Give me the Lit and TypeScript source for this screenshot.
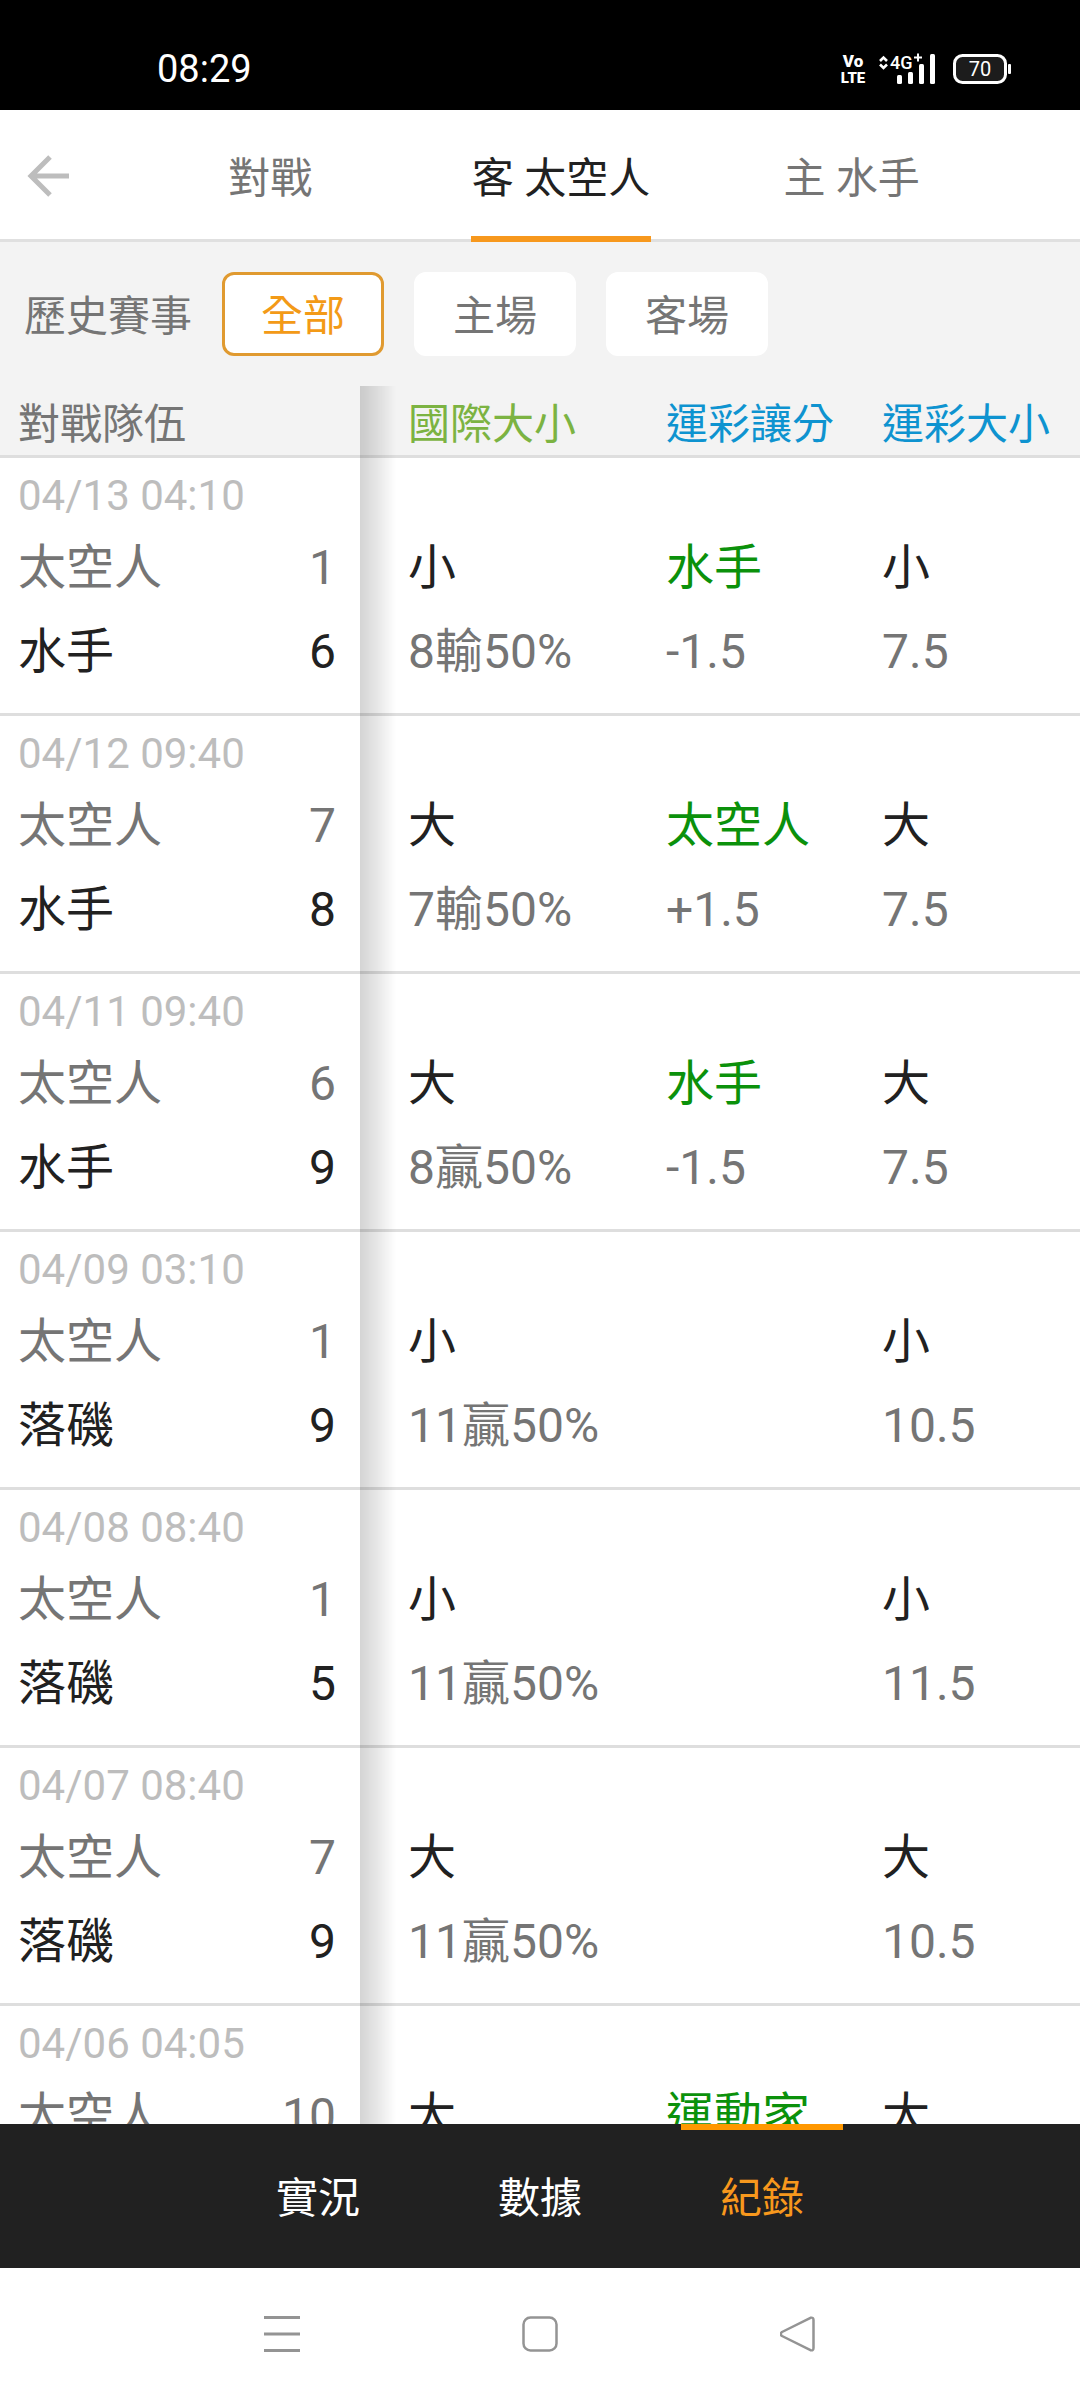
import { LitElement, html, css, svg, nothing } from "lit";
import { customElement, property, state } from "lit/decorators.js";
import { classMap } from "lit/directives/class-map.js";

interface Pick {
  main: string;
  detail?: string;
}

interface Side {
  name: string;
  score: number;
}

interface Game {
  date: string;
  away: Side;
  home?: Side;
  total: Pick;
  spread?: Pick;
  lottery: Pick;
}

const astros = (score: number): Side => ({ name: "太空人", score });
const mariners = (score: number): Side => ({ name: "水手", score });
const rockies = (score: number): Side => ({ name: "落磯", score });

const GAMES: Game[] = [
  { date: "04/13 04:10", away: astros(1), home: mariners(6), total: { main: "小", detail: "8輸50%" }, spread: { main: "水手", detail: "-1.5" }, lottery: { main: "小", detail: "7.5" } },
  { date: "04/12 09:40", away: astros(7), home: mariners(8), total: { main: "大", detail: "7輸50%" }, spread: { main: "太空人", detail: "+1.5" }, lottery: { main: "大", detail: "7.5" } },
  { date: "04/11 09:40", away: astros(6), home: mariners(9), total: { main: "大", detail: "8贏50%" }, spread: { main: "水手", detail: "-1.5" }, lottery: { main: "大", detail: "7.5" } },
  { date: "04/09 03:10", away: astros(1), home: rockies(9), total: { main: "小", detail: "11贏50%" }, lottery: { main: "小", detail: "10.5" } },
  { date: "04/08 08:40", away: astros(1), home: rockies(5), total: { main: "小", detail: "11贏50%" }, lottery: { main: "小", detail: "11.5" } },
  { date: "04/07 08:40", away: astros(7), home: rockies(9), total: { main: "大", detail: "11贏50%" }, lottery: { main: "大", detail: "10.5" } },
  { date: "04/06 04:05", away: astros(10), total: { main: "大" }, spread: { main: "運動家" }, lottery: { main: "大" } },
];

const buttonReset = css`
  button {
    margin: 0;
    padding: 0;
    border: 0;
    background: none;
    font: inherit;
    color: inherit;
    cursor: pointer;
  }
  svg {
    display: block;
  }
`;

@customElement("status-bar")
class StatusBar extends LitElement {
  static styles = css`
    :host {
      display: flex;
      justify-content: space-between;
      align-items: center;
      height: 110px;
      padding: 28px 68px 0 157px;
      box-sizing: border-box;
      background: #000;
      color: #fff;
    }
    .clock {
      font-size: 38px;
      line-height: 48px;
    }
    .volte {
      font-size: 17px;
      font-weight: 900;
    }
    .lte {
      font-size: 15px;
      font-weight: 900;
    }
    .network {
      font-size: 18px;
      font-weight: 500;
    }
    .level {
      font-size: 20px;
      font-weight: 400;
    }
  `;

  render() {
    return html`
      <time class="clock">08:29</time>
      <svg width="176" height="44" viewBox="-6 -6 176 44" fill="#fff" aria-label="VoLTE 4G+ 70%">
        <text class="volte" x="11" y="14" text-anchor="middle">Vo</text>
        <text class="lte" x="11" y="30" text-anchor="middle">LTE</text>
        <path d="M38 8 L41.5 4.5 L45 8 M38 11.5 L41.5 15 L45 11.5" fill="none" stroke="#fff" stroke-width="2.6" />
        <text class="network" x="48" y="16">4G</text>
        <path d="M76 0.5v8M72 4.5h8" stroke="#fff" stroke-width="2" />
        <rect x="55" y="22" width="5" height="9" rx="1.5" />
        <rect x="66" y="19" width="5" height="12" rx="1.5" />
        <rect x="77" y="11" width="5" height="20" rx="1.5" />
        <rect x="88" y="1" width="5" height="30" rx="1.5" />
        <rect x="112.5" y="2.5" width="51" height="27" rx="8" fill="#1c1c1c" stroke="#fff" stroke-width="3" />
        <rect x="166" y="11" width="3" height="10" rx="1" />
        <text class="level" x="138" y="23" text-anchor="middle">70</text>
      </svg>
    `;
  }
}

@customElement("team-tabs")
class TeamTabs extends LitElement {
  @state() private selected = 1;
  private tabs = ["對戰", "客 太空人", "主 水手"];

  static styles = [
    buttonReset,
    css`
      :host {
        display: flex;
        background: #fff;
        box-shadow: inset 0 -3px #e0e0e0;
      }
      .back {
        display: flex;
        align-items: center;
        width: 125px;
        padding: 0 0 0 27px;
      }
      .tabs {
        display: grid;
        grid-template-columns: repeat(3, 1fr);
        flex: 1;
        margin-right: 83px;
      }
      .tab {
        display: flex;
        justify-content: center;
        color: #757575;
      }
      .label {
        padding: 39px 1px 27px;
        border-bottom: 6px solid transparent;
        line-height: 60px;
        white-space: nowrap;
      }
      .selected .label {
        color: #212121;
        border-color: #f7981d;
      }
    `,
  ];

  render() {
    return html`
      <button class="back" aria-label="返回">
        <svg width="42" height="42" viewBox="0 0 42 42" fill="none" stroke="#bdbdbd" stroke-width="5">
          <path d="M42 21H4M23 2L4 21L23 40" />
        </svg>
      </button>
      <div class="tabs" role="tablist">
        ${this.tabs.map(
          (name, i) => html`<button
            role="tab"
            aria-selected=${i === this.selected}
            class=${classMap({ tab: true, selected: i === this.selected })}
            @click=${() => (this.selected = i)}
          ><span class="label">${name}</span></button>`
        )}
      </div>
    `;
  }
}

@customElement("venue-filter")
class VenueFilter extends LitElement {
  @state() private selected = 0;
  private options = ["全部", "主場", "客場"];

  static styles = [
    buttonReset,
    css`
      :host {
        display: flex;
        gap: 30px;
        padding: 30px 24px;
        background: #f3f3f3;
        color: #757575;
        line-height: 72px;
      }
      .title {
        padding-top: 9px;
      }
      button.option {
        width: 162px;
        padding-top: 6px;
        border: 3px solid #fff;
        border-radius: 12px;
        background: #fff;
      }
      button.selected {
        border-color: #e09a30;
        color: #f39a17;
      }
    `,
  ];

  render() {
    return html`
      <span class="title">歷史賽事</span>
      ${this.options.map(
        (name, i) => html`<button
          aria-pressed=${i === this.selected}
          class=${classMap({ option: true, selected: i === this.selected })}
          @click=${() => (this.selected = i)}
        >${name}</button>`
      )}
    `;
  }
}

@customElement("record-table")
class RecordTable extends LitElement {
  @property({ attribute: false }) games: Game[] = [];

  static styles = css`
    :host {
      display: block;
      flex: 1;
      min-height: 0;
      overflow: auto;
      scrollbar-width: none;
      background: #fff;
    }
    .records {
      width: 100%;
      border-collapse: separate;
      border-spacing: 0;
      table-layout: fixed;
    }
    .col-team {
      width: 360px;
    }
    .col-total {
      width: 306px;
    }
    .col-spread {
      width: 216px;
    }
    th,
    td {
      padding: 0;
      border-bottom: 3px solid #dedede;
      text-align: left;
      vertical-align: top;
      font-weight: 400;
      white-space: nowrap;
    }
    th {
      padding: 9px 0 0;
      line-height: 60px;
      background: #f3f3f3;
      color: #0e93d0;
    }
    td {
      padding: 68px 0 19px;
      font-size: 48px;
      line-height: 84px;
      color: #757575;
    }
    .team {
      position: sticky;
      left: 0;
      z-index: 1;
      padding-left: 18px;
      padding-right: 24px;
      color: #757575;
    }
    td.team {
      padding-top: 8px;
      background: #fff;
    }
    .team::after {
      content: "";
      position: absolute;
      top: 0;
      bottom: -3px;
      left: 100%;
      width: 36px;
      background: linear-gradient(to right, rgba(0, 0, 0, 0.17), rgba(0, 0, 0, 0.09) 50%, transparent);
    }
    .total {
      padding-left: 48px;
    }
    th.total {
      color: #7cb342;
    }
    .date {
      display: block;
      font-size: 42px;
      line-height: 60px;
      color: #bdbdbd;
    }
    .side {
      display: flex;
      justify-content: space-between;
    }
    .dark {
      color: #212121;
    }
    .green {
      color: #0b910b;
    }
  `;

  private pick(p: Pick | undefined, tone: string) {
    if (!p) return nothing;
    return html`<div class=${tone}>${p.main}</div>${p.detail ? html`<div>${p.detail}</div>` : nothing}`;
  }

  private side(s: Side | undefined, dark: boolean) {
    if (!s) return nothing;
    return html`<div class=${classMap({ side: true, dark })}><span>${s.name}</span><span>${s.score}</span></div>`;
  }

  render() {
    return html`
      <table class="records">
        <colgroup>
          <col class="col-team" />
          <col class="col-total" />
          <col class="col-spread" />
          <col />
        </colgroup>
        <thead>
          <tr>
            <th class="team" scope="col">對戰隊伍</th>
            <th class="total" scope="col">國際大小</th>
            <th scope="col">運彩讓分</th>
            <th scope="col">運彩大小</th>
          </tr>
        </thead>
        <tbody>
          ${this.games.map(
            (g) => html`<tr>
              <td class="team">
                <time class="date">${g.date}</time>
                ${this.side(g.away, false)}${this.side(g.home, true)}
              </td>
              <td class="total">${this.pick(g.total, "dark")}</td>
              <td>${this.pick(g.spread, "green")}</td>
              <td>${this.pick(g.lottery, "dark")}</td>
            </tr>`
          )}
        </tbody>
      </table>
    `;
  }
}

@customElement("section-bar")
class SectionBar extends LitElement {
  @state() private selected = 2;
  private sections = ["實況", "數據", "紀錄"];

  static styles = [
    buttonReset,
    css`
      :host {
        display: flex;
        justify-content: center;
        gap: 60px;
        background: #212121;
        color: #fff;
      }
      button.section {
        width: 162px;
        padding: 39px 0;
        border-top: 6px solid transparent;
        line-height: 60px;
      }
      button.selected {
        border-color: #ff9800;
        color: #f7981d;
      }
    `,
  ];

  render() {
    return this.sections.map(
      (name, i) => html`<button
        class=${classMap({ section: true, selected: i === this.selected })}
        @click=${() => (this.selected = i)}
      >${name}</button>`
    );
  }
}

@customElement("system-nav")
class SystemNav extends LitElement {
  static styles = [
    buttonReset,
    css`
      :host {
        display: flex;
        justify-content: center;
        gap: 222px;
        padding: 48px 0;
        background: #fff;
      }
    `,
  ];

  private icon(label: string, shape: unknown) {
    return html`<button aria-label=${label}>
      <svg width="36" height="36" viewBox="0 0 36 36" fill="none" stroke="#949494" stroke-width="3">${shape}</svg>
    </button>`;
  }

  render() {
    return html`
      ${this.icon("選單", svg`<path d="M0 1.5H36M0 18H36M0 34.5H36" />`)}
      ${this.icon("主畫面", svg`<rect x="1.5" y="1.5" width="33" height="33" rx="7" stroke-width="2.5" />`)}
      ${this.icon("返回", svg`<path stroke-width="2.5" stroke-linejoin="round" d="M30.5 1.8 L2 16 Q-0.5 18 2 20 L30.5 34.2 Q33.5 35 33.5 32 V4 Q33.5 1 30.5 1.8 Z" />`)}
    `;
  }
}

@customElement("app-root")
class AppRoot extends LitElement {
  static styles = css`
    :host {
      display: flex;
      flex-direction: column;
      height: 100vh;
      background: #fff;
      font-family: Roboto, "Noto Sans CJK TC", sans-serif;
      font-size: 42px;
    }
  `;

  render() {
    return html`
      <status-bar></status-bar>
      <team-tabs></team-tabs>
      <venue-filter></venue-filter>
      <record-table .games=${GAMES}></record-table>
      <section-bar></section-bar>
      <system-nav></system-nav>
    `;
  }
}
